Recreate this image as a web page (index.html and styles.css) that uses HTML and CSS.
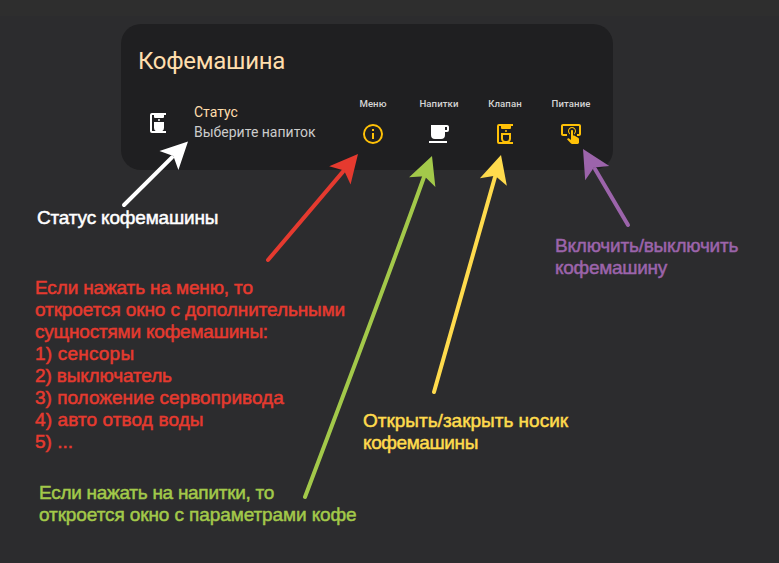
FILE: index.html
```html
<!DOCTYPE html>
<html lang="ru">
<head>
<meta charset="utf-8">
<title>Кофемашина</title>
<link rel="stylesheet" href="styles.css">
</head>
<body>
<main class="board">
  <section class="card">
    <h1 class="card-title">Кофемашина</h1>
    <div class="row">
      <svg class="icon state-icon" viewBox="0 0 24 24"><path d="M20 4V2H6A2 2 0 0 0 4 4V20A2 2 0 0 0 6 22H20V20H16.33A4 4 0 0 0 18 16.67V11H8V16.67A4 4 0 0 0 9.67 20H6V4H8V6A1 1 0 0 0 9 7H17A1 1 0 0 0 18 6V4ZM13 8A1 1 0 0 1 13 10A1 1 0 0 1 13 8Z"/></svg>
      <div class="state">
        <div class="state-name">Статус</div>
        <div class="state-value">Выберите напиток</div>
      </div>
      <div class="actions">
        <div class="action"><span>Меню</span><svg class="icon" viewBox="0 0 24 24"><path d="M11,9H13V7H11M12,20C7.59,20 4,16.41 4,12C4,7.59 7.59,4 12,4C16.41,4 20,7.59 20,12C20,16.41 16.41,20 12,20M12,2A10,10 0 0,0 2,12A10,10 0 0,0 12,22A10,10 0 0,0 22,12A10,10 0 0,0 12,2M11,17H13V11H11V17Z"/></svg></div>
        <div class="action idle"><span>Напитки</span><svg class="icon" viewBox="0 0 24 24"><path d="M2,21H20V19H2M20,8H18V5H20M20,3H4V13A4,4 0 0,0 8,17H14A4,4 0 0,0 18,13V10H20A2,2 0 0,0 22,8V5C22,3.89 21.1,3 20,3Z"/></svg></div>
        <div class="action"><span>Клапан</span><svg class="icon" viewBox="0 0 24 24"><path fill-rule="evenodd" d="M20 4V2H6A2 2 0 0 0 4 4V20A2 2 0 0 0 6 22H20V20H16.33A4 4 0 0 0 18 16.67V11H8V16.67A4 4 0 0 0 9.67 20H6V4H8V6A1 1 0 0 0 9 7H17A1 1 0 0 0 18 6V4ZM10 13H16V16.67A2.33 2.33 0 0 1 13.67 19H12.33A2.33 2.33 0 0 1 10 16.67ZM13 8A1 1 0 0 1 13 10A1 1 0 0 1 13 8Z"/></svg></div>
        <div class="action"><span>Питание</span><svg class="icon" viewBox="0 0 24 24"><path d="M13 5C15.21 5 17 6.79 17 9C17 10.5 16.2 11.77 15 12.46V11.24C15.61 10.69 16 9.89 16 9C16 7.34 14.66 6 13 6S10 7.34 10 9C10 9.89 10.39 10.69 11 11.24V12.46C9.8 11.77 9 10.5 9 9C9 6.79 10.79 5 13 5M20 20.5C19.97 21.32 19.32 21.97 18.5 22H13C12.62 22 12.26 21.85 12 21.57L8 17.37L8.74 16.6C8.93 16.39 9.2 16.28 9.5 16.28H9.7L12 18V9C12 8.45 12.45 8 13 8S14 8.45 14 9V13.47L15.21 13.6L19.15 15.79C19.68 16.03 20 16.56 20 17.14V20.5M20 2H4C2.9 2 2 2.9 2 4V12C2 13.11 2.9 14 4 14H8V12H4V4H20V12H18V14H20C21.13 14 22 13.09 22 12V4C22 2.9 21.11 2 20 2Z"/></svg></div>
      </div>
    </div>
  </section>

  <svg class="arrows" viewBox="0 0 779 563">
    <defs><path id="head" d="M0 0L-28 14L-21.500 0L-28 -14Z"/></defs>
    <g class="arrow white"><path d="M124 205L172 157.400"/><use href="#head" transform="translate(188 141.500) rotate(-44.800) scale(.96)"/></g>
    <g class="arrow red"><path d="M268 260L343 171.600"/><use href="#head" transform="translate(358 154) rotate(-49.700)"/></g>
    <g class="arrow green"><path d="M305 497Q390 272 424 177"/><use href="#head" transform="translate(432 156) rotate(-69.600)"/></g>
    <g class="arrow yellow"><path d="M434 392L495 177"/><use href="#head" transform="translate(501 155) rotate(-74.200)"/></g>
    <g class="arrow purple"><path d="M628 225L595 169"/><use href="#head" transform="translate(583 149) rotate(-120.600)"/></g>
  </svg>

  <p class="note note-status white">Статус кофемашины</p>
  <p class="note note-menu red">
    <span class="t2">Если нажать на меню, то</span>
    <span class="t1">откроется окно с дополнительными</span>
    <span class="t3">сущностями кофемашины:</span>
    <span class="w2">1) сенсоры</span>
    <span class="t2">2) выключатель</span>
    <span>3) положение сервопривода</span>
    <span class="w1">4) авто отвод воды</span>
    <span>5) ...</span>
  </p>
  <p class="note note-drinks green">
    <span class="t4">Если нажать на напитки, то</span>
    <span class="t1">откроется окно с параметрами кофе</span>
  </p>
  <p class="note note-valve yellow">
    <span>Открыть/закрыть носик</span>
    <span class="t5">кофемашины</span>
  </p>
  <p class="note note-power purple">
    <span class="t3">Включить/выключить</span>
    <span class="t4">кофемашину</span>
  </p>
</main>
</body>
</html>
```

FILE: styles.css
```css
* { box-sizing: border-box; }
body { margin: 0; background: #2c2c2e; }
.board {
  position: relative;
  width: 779px;
  height: 563px;
  padding: 8px 0 0 121px;
  border-top: 16px solid #2e2e2e;
  overflow: hidden;
}
.card {
  width: 492px;
  height: 146px;
  padding: 18px 9px 0 17px;
  border-radius: 20px;
  background: #1f1f21;
  font-family: Roboto, sans-serif;
}
.card-title {
  margin: 0;
  color: #ffdead;
  font-size: 24px;
  font-weight: 400;
  line-height: 38px;
  letter-spacing: -0.29px;
}
.row { display: flex; margin-top: 16px; }
.icon { display: block; width: 24px; height: 24px; fill: currentColor; }
.state-icon { margin: 15px 0 0 8px; color: #fff; }
.state {
  width: 146px;
  margin: 6px 0 0 24px;
  font-size: 14px;
  line-height: 20px;
  white-space: nowrap;
}
.state-name { color: #ffdead; }
.state-value { color: #ccc; }
.actions { display: flex; }
.action {
  display: flex;
  flex-direction: column;
  align-items: center;
  width: 66px;
  color: #ffc107;
}
.action span {
  margin: 1px 0 11px;
  color: #d4d4d4;
  font-size: 9.6px;
  font-weight: 500;
  line-height: 14px;
  letter-spacing: 0.1px;
}
.action.idle { color: #fff; }

.arrows {
  position: absolute;
  top: -16px;
  left: 0;
  width: 779px;
  height: 563px;
}
.arrow { fill: currentColor; }
.arrow > path {
  fill: none;
  stroke: currentColor;
  stroke-width: 4;
  stroke-linecap: round;
}
.note {
  position: absolute;
  margin: 0;
  font: 19px/22px "Liberation Sans", Arial, sans-serif;
  -webkit-text-stroke: 0.5px currentColor;
  white-space: nowrap;
}
.note span { display: block; }
.note-status { left: 37px; top: 191px; letter-spacing: -0.18px; }
.note-menu { left: 35px; top: 261px; }
.note-drinks { left: 39px; top: 466px; }
.note-valve { left: 363px; top: 394px; }
.note-power { left: 555px; top: 219px; }

/* tracking, tight to wide */
.note .t5 { letter-spacing: -0.4px; }
.note .t4 { letter-spacing: -0.28px; }
.note .t3 { letter-spacing: -0.2px; }
.note .t2 { letter-spacing: -0.14px; }
.note .t1 { letter-spacing: -0.1px; }
.note .w1 { letter-spacing: 0.1px; }
.note .w2 { letter-spacing: 0.2px; }

.white { color: #fff; }
.red { color: #e53a2f; }
.green { color: #a3c94a; }
.yellow { color: #ffdb4d; }
.purple { color: #9c64ab; }
```
